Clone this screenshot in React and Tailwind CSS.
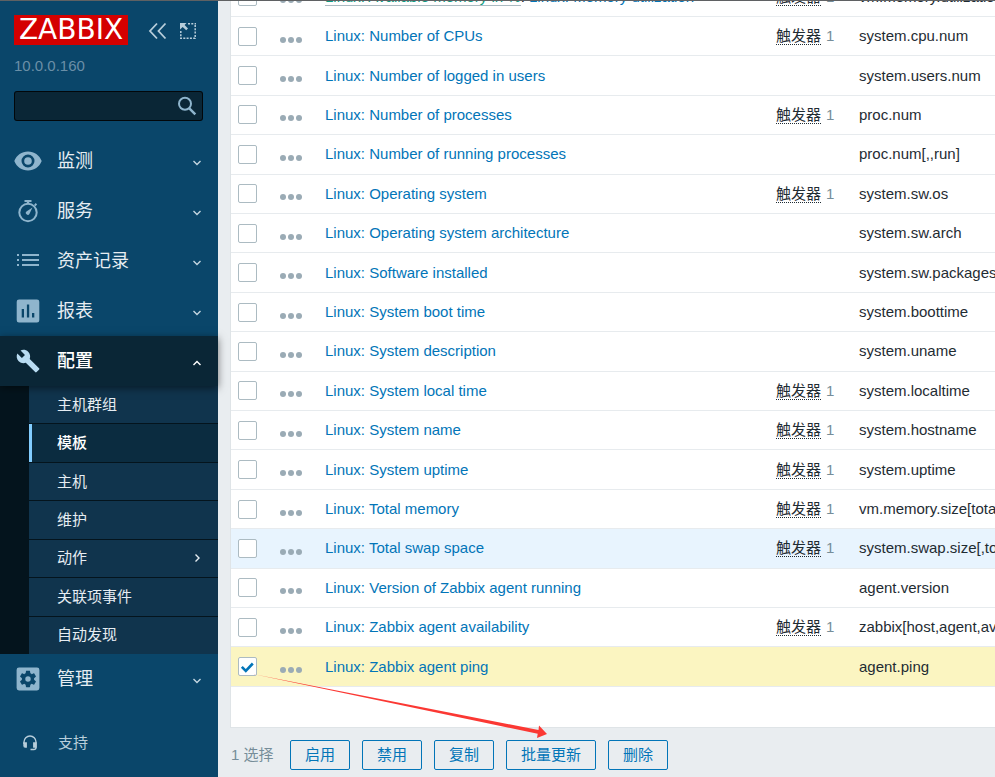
import { useState } from "react";

const NAV_TOP = [
  { label: "监测", icon: "eye" },
  { label: "服务", icon: "timer" },
  { label: "资产记录", icon: "list" },
  { label: "报表", icon: "chart" },
];

const SUBMENU = ["主机群组", "模板", "主机", "维护", "动作", "关联项事件", "自动发现"];

const ITEMS = [
  { name: "Number of CPUs", key: "system.cpu.num", trigger: true },
  { name: "Number of logged in users", key: "system.users.num" },
  { name: "Number of processes", key: "proc.num", trigger: true },
  { name: "Number of running processes", key: "proc.num[,,run]" },
  { name: "Operating system", key: "system.sw.os", trigger: true },
  { name: "Operating system architecture", key: "system.sw.arch" },
  { name: "Software installed", key: "system.sw.packages" },
  { name: "System boot time", key: "system.boottime" },
  { name: "System description", key: "system.uname" },
  { name: "System local time", key: "system.localtime", trigger: true },
  { name: "System name", key: "system.hostname", trigger: true },
  { name: "System uptime", key: "system.uptime", trigger: true },
  { name: "Total memory", key: "vm.memory.size[total]", trigger: true },
  { name: "Total swap space", key: "system.swap.size[,total]", trigger: true, hover: true },
  { name: "Version of Zabbix agent running", key: "agent.version" },
  { name: "Zabbix agent availability", key: "zabbix[host,agent,available]", trigger: true },
  { name: "Zabbix agent ping", key: "agent.ping" },
];

function NavIcon({ name }) {
  return (
    <svg viewBox="0 0 28 28" className="size-7 shrink-0" fill="currentColor" aria-hidden="true">
      {name === "eye" && (
        <path
          fillRule="evenodd"
          d="M14 4.5C7.8 4.5 2.500 8.300.3 14c2.200 5.700 7.500 9.500 13.700 9.500S25.500 19.700 27.700 14C25.500 8.300 20.200 4.500 14 4.500Zm0 16a6.500 6.500 0 1 1 0-13 6.500 6.500 0 0 1 0 13Zm0-10.300a3.800 3.800 0 1 0 0 7.600 3.800 3.800 0 0 0 0-7.600Z"
        />
      )}
      {name === "timer" && (
        <>
          <circle cx="14" cy="15.500" r="8.700" fill="none" stroke="currentColor" strokeWidth="2" />
          <path d="M10.500 3h7v2h-2.300v2h-2.400V5h-2.300ZM20 8l1.700-1.900 1.400 1.400L21.500 9.300ZM18.500 10.500l-3 6.200a1.900 1.900 0 1 1-2.700-2.500Z" />
        </>
      )}
      {name === "list" && (
        <path d="M3 7h2v2H3ZM8 7h17v2H8ZM3 12h2v2H3ZM8 12h17v2H8ZM3 17h2v2H3ZM8 17h17v2H8Z" />
      )}
      {name === "chart" && (
        <path
          fillRule="evenodd"
          d="M5 2.500h18a2.300 2.300 0 0 1 2.300 2.300v18.400a2.300 2.300 0 0 1-2.300 2.300H5a2.300 2.300 0 0 1-2.300-2.300V4.800A2.300 2.300 0 0 1 5 2.500ZM7.700 12v8.500h2.300V12ZM12.900 7.500v13h2.300v-13ZM18 16v4.500h2.300V16Z"
        />
      )}
      {name === "wrench" && (
        <path
          transform="translate(1.700 1.700) scale(1.030)"
          d="M22.700 19l-9.100-9.100c.9-2.300.4-5-1.500-6.900-2-2-5-2.400-7.400-1.300L9 6 6 9 1.600 4.700C.4 7.100.9 10.100 2.900 12.100c1.900 1.900 4.600 2.400 6.900 1.500l9.100 9.100c.4.4 1 .4 1.400 0l2.300-2.300c.5-.4.5-1.100.1-1.400z"
        />
      )}
      {name === "gear" && (
        <>
          <rect x="2.600" y="2.600" width="22.800" height="22.800" rx="2.400" />
          <path
            fill="#0a466a"
            fillRule="evenodd"
            transform="translate(3.800 3.800) scale(.85)"
            d="M19.140 12.940c.04-.3.06-.61.06-.94 0-.32-.02-.64-.07-.94l2.030-1.580c.18-.14.23-.41.12-.61l-1.920-3.320c-.12-.22-.37-.29-.59-.22l-2.390.96c-.5-.38-1.030-.7-1.620-.94l-.36-2.540c-.04-.24-.24-.41-.48-.41h-3.840c-.24 0-.43.17-.47.41l-.36 2.540c-.59.24-1.130.57-1.620.94l-2.390-.96c-.22-.08-.47 0-.59.22L2.740 8.870c-.12.21-.08.47.12.61l2.030 1.580c-.05.3-.09.63-.09.94s.02.64.07.94l-2.030 1.580c-.18.14-.23.41-.12.61l1.920 3.320c.12.22.37.29.59.22l2.390-.96c.5.38 1.030.7 1.620.94l.36 2.540c.05.24.24.41.48.41h3.840c.24 0 .44-.17.47-.41l.36-2.540c.59-.24 1.130-.56 1.620-.94l2.390.96c.22.08.47 0 .59-.22l1.920-3.320c.12-.22.07-.47-.12-.61l-2.010-1.580ZM12 15.200a3.200 3.200 0 1 1 0-6.400 3.200 3.200 0 0 1 0 6.400Z"
          />
        </>
      )}
    </svg>
  );
}

function Chevron({ dir }) {
  const d = { down: "M1.500 3 5 6.500 8.500 3", up: "M1.500 7 5 3.500 8.500 7", right: "M3.500 1.500 7 5 3.500 8.500" }[dir];
  return (
    <svg viewBox="0 0 10 10" className="size-[10px] shrink-0" fill="none" stroke="currentColor" strokeWidth="1.400" aria-hidden="true">
      <path d={d} />
    </svg>
  );
}

function NavItem({ label, icon, open }) {
  return (
    <button
      type="button"
      aria-expanded={!!open}
      className={`flex h-[50px] w-full items-center pr-4 pl-[14px] text-left ${
        open ? "relative bg-[#0a2636] text-[#b9dcf2] shadow-[0_2px_8px_rgba(0,0,0,0.5)]" : "text-[#8fb5cd]"
      }`}
    >
      <NavIcon name={icon} />
      <span className={`ml-[15px] flex-1 text-lg leading-6 ${open ? "font-medium text-white" : "text-[#e6edf2]"}`}>{label}</span>
      <span className={`pt-1 ${open ? "text-white" : "text-[#c3d5e0]"}`}>
        <Chevron dir={open ? "up" : "down"} />
      </span>
    </button>
  );
}

function Sidebar() {
  return (
    <aside className="flex w-[218px] shrink-0 flex-col bg-[#0a466a]">
      <div className="flex items-start px-[14px] pt-[15px]">
        <a
          href="#home"
          className="flex h-[30px] w-[114px] items-center justify-center bg-[#d40000] font-['DejaVu_Sans',sans-serif] text-[28px] leading-[30px] text-white"
        >
          ZABBIX
        </a>
        <button type="button" aria-label="收起" className="mt-[7px] ml-5 text-[#b8cedb]">
          <svg viewBox="0 0 20 18" className="h-[18px] w-5" fill="none" stroke="currentColor" strokeWidth="1.800" aria-hidden="true">
            <path d="M9 1.500 2 9l7 7.500M17.500 1.500l-7 7.500 7 7.500" />
          </svg>
        </button>
        <button type="button" aria-label="隐藏" className="mt-[7px] ml-[11px] text-[#b8cedb]">
          <svg viewBox="0 0 18 18" className="size-[18px]" aria-hidden="true">
            <path d="M9 1.800h8M16.200 3v14M1 16.200h15M1.800 9v8" fill="none" stroke="currentColor" strokeWidth="1.500" strokeDasharray="2 1.300" />
            <path d="M1 1h6.500L5.600 3 9 6.500 7.200 8.300 3.700 4.900 1 7.500Z" fill="currentColor" />
          </svg>
        </button>
      </div>
      <p className="mt-[11px] px-[14px] text-[15px] leading-5 text-[#6a8fa7]">10.0.0.160</p>
      <div className="mx-[14px] mt-[15px] flex h-[30px] w-[189px] items-center rounded-[3px] border border-black/80 bg-[#0a2636] pr-[5px]">
        <input type="search" aria-label="搜索" className="h-full min-w-0 flex-1 bg-transparent px-2 text-[15px] text-white outline-none" />
        <button type="button" aria-label="搜索" className="text-[#8fb5cd]">
          <svg viewBox="0 0 20 20" className="size-5" fill="none" stroke="currentColor" aria-hidden="true">
            <circle cx="8" cy="7.800" r="6" strokeWidth="2" />
            <path d="m12.300 12.300 6 6" strokeWidth="2.500" />
          </svg>
        </button>
      </div>
      <nav className="mt-[15px]">
        {NAV_TOP.map((n) => (
          <NavItem key={n.label} {...n} />
        ))}
        <NavItem label="配置" icon="wrench" open />
        <ul className="flex h-[268px] flex-col bg-[#04141d] pl-[29px]">
          {SUBMENU.map((label) => (
            <li key={label} className="flex-1 border-b border-[#04141d] last:border-b-0">
              <a
                href={`#${label}`}
                className={`flex h-full items-center border-l-[3px] pr-4 pl-[25px] text-[15px] leading-5 ${
                  label === "模板" ? "border-[#82cdff] bg-[#0b2c40] font-medium text-white" : "border-[#10344d] bg-[#10344d] text-[#e6edf2]"
                }`}
              >
                <span className="flex-1">{label}</span>
                {label === "动作" && <Chevron dir="right" />}
              </a>
            </li>
          ))}
        </ul>
        <NavItem label="管理" icon="gear" />
      </nav>
      <a href="#support" className="mt-[24px] flex h-[30px] items-center pl-[22px] text-[#b8cedb]">
        <svg viewBox="0 0 16 16" className="size-4" fill="none" stroke="currentColor" strokeWidth="1.400" aria-hidden="true">
          <path d="M2 9V7a6 6 0 0 1 12 0v5.500c0 1.400-.8 2-2.200 2H8.500" />
          <path d="M2 8h2.200v4H3.200C2.300 12 2 11.500 2 10.800ZM14 8h-2.200v4H14Z" fill="currentColor" />
        </svg>
        <span className="ml-5 text-[15px] leading-5">支持</span>
      </a>
    </aside>
  );
}

function TriggerCell() {
  return (
    <>
      <button type="button" className="border-b border-dotted border-[#1f2c33] leading-4 text-[#1f2c33]">
        触发器
      </button>
      <span className="ml-[5px] text-[#768d99]">1</span>
    </>
  );
}

function Row({ label, name, itemKey, trigger, hover, checked, onToggle }) {
  const tone = checked ? "bg-[#fbf5c1]" : hover ? "bg-[#e8f4fe]" : "bg-white";
  return (
    <tr className={`border-b border-[#e7ebee] ${tone}`}>
      <td className="pl-[7px]">
        <span className="grid size-[19px] *:col-start-1 *:row-start-1">
          <input
            type="checkbox"
            aria-label={label}
            checked={checked}
            onChange={onToggle}
            className="size-[19px] appearance-none rounded-[2px] border border-[#acbbc2] bg-white"
          />
          {checked && (
            <svg viewBox="0 0 19 19" className="pointer-events-none size-[19px]" fill="none" stroke="#0275b8" strokeWidth="2.600" aria-hidden="true">
              <path d="m3.800 9.800 4 4 7-7.300" />
            </svg>
          )}
        </span>
      </td>
      <td className="pt-[7px] pl-2">
        <button type="button" aria-label="菜单" className="flex gap-[2px] text-[#9aabb5]">
          <span className="size-[6px] rounded-full bg-current" />
          <span className="size-[6px] rounded-full bg-current" />
          <span className="size-[6px] rounded-full bg-current" />
        </button>
      </td>
      <td className="pl-2">{name}</td>
      <td className="pl-2">{trigger && <TriggerCell />}</td>
      <td className="pl-2">{itemKey}</td>
    </tr>
  );
}

const ACTIONS = ["启用", "禁用", "复制", "批量更新", "删除"];

export default function App() {
  const [selected, setSelected] = useState(["agent.ping"]);
  const toggle = (key) => setSelected((s) => (s.includes(key) ? s.filter((k) => k !== key) : [...s, key]));
  const rowProps = (key) => ({ itemKey: key, checked: selected.includes(key), onToggle: () => toggle(key) });

  return (
    <div className="relative flex h-screen overflow-hidden bg-[#e9edf0] font-['Liberation_Sans','Noto_Sans_CJK_SC',sans-serif] text-[15px] leading-5 text-[#1f2c33]">
      <Sidebar />
      <main className="flex min-w-0 flex-1 flex-col pl-3">
        <div className="flex min-h-0 flex-1 flex-col justify-end overflow-hidden border-b border-l border-[#dfe4e7] bg-white pb-[40px]">
          <table className="h-[709px] w-full shrink-0 table-fixed border-collapse whitespace-nowrap">
            <colgroup>
              <col className="w-[41px]" />
              <col className="w-[45px]" />
              <col className="w-[451px]" />
              <col className="w-[83px]" />
              <col />
            </colgroup>
            <tbody>
              <Row
                {...rowProps("vm.memory.utilization")}
                label="Memory utilization"
                trigger
                name={
                  <>
                    <a href="#master" className="border-b border-[#acbbc2] text-[#0f9d83]">
                      Linux: Available memory in %
                    </a>
                    :{" "}
                    <a href="#item" className="text-[#0275b8]">
                      Linux: Memory utilization
                    </a>
                  </>
                }
              />
              {ITEMS.map((item) => (
                <Row
                  key={item.key}
                  {...rowProps(item.key)}
                  label={item.name}
                  trigger={item.trigger}
                  hover={item.hover}
                  name={
                    <a href="#item" className="text-[#0275b8]">
                      Linux: {item.name}
                    </a>
                  }
                />
              ))}
            </tbody>
          </table>
        </div>
        <footer className="flex h-[49px] shrink-0 items-center gap-3 pt-[5px]">
          <span className="w-[48px] pl-px whitespace-nowrap text-[#768d99]">{selected.length} 选择</span>
          {ACTIONS.map((a) => (
            <button
              key={a}
              type="button"
              className="h-[30px] rounded-[2px] border border-[#0275b8] px-[14px] whitespace-nowrap text-[#0275b8]"
            >
              {a}
            </button>
          ))}
        </footer>
      </main>
      <div className="absolute inset-x-0 top-0 h-px bg-[#5f6163]" />
      <svg viewBox="0 0 294 64" className="pointer-events-none absolute top-[674px] left-[253px] h-16 w-[294px]" fill="#fb3833" aria-hidden="true">
        <path d="M0 0 285.500 56l.5-4.500 8 8.500-10 4 .7-4.300Z" />
      </svg>
    </div>
  );
}
